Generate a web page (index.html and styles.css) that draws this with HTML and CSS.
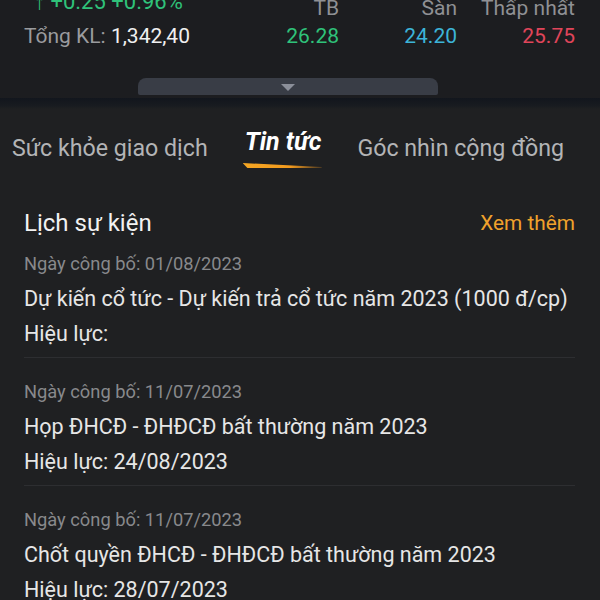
FILE: index.html
```html
<!DOCTYPE html>
<html lang="vi">
<head>
<meta charset="utf-8">
<link rel="stylesheet" href="styles.css">
</head>
<body>
<div class="top">
  <div class="stats">
    <div class="left">
      <div class="change">↑ +0.25 +0.96%</div>
      <div class="kl"><span class="kl-label">Tổng KL:</span> <span class="kl-value">1,342,40</span></div>
    </div>
    <div class="col">
      <div class="label">TB</div>
      <div class="value green">26.28</div>
    </div>
    <div class="col">
      <div class="label">Sàn</div>
      <div class="value cyan">24.20</div>
    </div>
    <div class="col">
      <div class="label">Thấp nhất</div>
      <div class="value red">25.75</div>
    </div>
  </div>
  <div class="handle"><span class="tri"></span></div>
</div>
<div class="band"></div>
<div class="main">
  <div class="tabs">
    <div class="tab">Sức khỏe giao dịch</div>
    <div class="tab active">Tin tức<span class="underline"></span></div>
    <div class="tab">Góc nhìn cộng đồng</div>
  </div>
  <div class="section-head">
    <div class="section-title">Lịch sự kiện</div>
    <div class="more">Xem thêm</div>
  </div>
  <div class="event">
    <div class="date">Ngày công bố: 01/08/2023</div>
    <div class="title">Dự kiến cổ tức - Dự kiến trả cổ tức năm 2023 (1000 đ/cp)</div>
    <div class="eff">Hiệu lực:</div>
  </div>
  <div class="event">
    <div class="date">Ngày công bố: 11/07/2023</div>
    <div class="title">Họp ĐHCĐ - ĐHĐCĐ bất thường năm 2023</div>
    <div class="eff">Hiệu lực: 24/08/2023</div>
  </div>
  <div class="event">
    <div class="date">Ngày công bố: 11/07/2023</div>
    <div class="title">Chốt quyền ĐHCĐ - ĐHĐCĐ bất thường năm 2023</div>
    <div class="eff">Hiệu lực: 28/07/2023</div>
  </div>
</div>
</body>
</html>
```
FILE: styles.css
```css
* { box-sizing: border-box; }
html, body { margin: 0; padding: 0; }
body {
  width: 600px;
  height: 600px;
  overflow: hidden;
  background: #1f2022;
  font-family: Roboto, "Noto Sans", sans-serif;
  color: #e8e8e8;
}
.top {
  background: #1c1d20;
  height: 102px;
  padding: 0 25px 0 24px;
}
.stats {
  display: grid;
  grid-template-columns: 1fr 118px 118px 118px;
  margin-top: -4px;
}
.left { display: flex; flex-direction: column; }
.change {
  color: #2fc27a;
  font-size: 22px;
  line-height: 24px;
  margin-top: -6px;
  padding-left: 10px;
  white-space: nowrap;
}
.kl {
  font-size: 21px;
  line-height: 24px;
  margin-top: 10px;
  white-space: nowrap;
}
.kl-label { color: #9a9b9e; }
.kl-value { color: #f0f0f0; }
.col { text-align: right; }
.label {
  color: #8f9094;
  font-size: 21px;
  line-height: 24px;
  white-space: nowrap;
}
.value {
  font-size: 21px;
  line-height: 24px;
  margin-top: 4px;
}
.green { color: #2fc27a; }
.cyan { color: #3cb4d8; }
.red { color: #e0455a; }
.handle {
  width: 300px;
  height: 17px;
  margin: 30px 0 0 114px;
  background: #393d46;
  border-radius: 8px 8px 2px 2px;
  display: flex;
  justify-content: center;
  padding-top: 6px;
}
.tri {
  width: 0;
  height: 0;
  border-left: 7px solid transparent;
  border-right: 7px solid transparent;
  border-top: 7px solid #8b8f99;
}
.band {
  height: 11px;
  background: linear-gradient(#12161d, #181b20 70%, #1f2022);
}
.main { padding: 0 25px 0 24px; }
.tabs {
  display: flex;
  align-items: flex-start;
  margin-left: -12px;
  margin-top: 18px;
  height: 79px;
  white-space: nowrap;
}
.tab {
  font-size: 23.2px;
  line-height: 30px;
  color: #b3b4b6;
  margin-top: 6px;
}
.tab.active {
  position: relative;
  color: #ffffff;
  font-style: italic;
  font-weight: 700;
  font-size: 25px;
  margin: 0 36px 0 37px;
}
.underline {
  position: absolute;
  left: -2px;
  top: 36px;
  width: 79px;
  height: 5px;
  background: linear-gradient(90deg, #f5a623, #f29a1e 60%, rgba(240,150,30,0.2));
  clip-path: polygon(0 0, 100% 80%, 100% 100%, 6% 100%);
}
.section-head {
  display: flex;
  justify-content: space-between;
  align-items: center;
  height: 34px;
}
.section-title { font-size: 24px; color: #f2f2f2; }
.more { font-size: 20.8px; color: #f0a22c; }
.event {
  border-bottom: 1px solid #2d2e31;
  padding: 22px 0 6px;
}
.section-head + .event { padding-top: 12px; }
.date {
  font-size: 18.3px;
  line-height: 24px;
  color: #88898c;
  margin-bottom: 5px;
}
.title, .eff {
  font-size: 21.5px;
  line-height: 35px;
  color: #e6e6e6;
  white-space: nowrap;
}
```
